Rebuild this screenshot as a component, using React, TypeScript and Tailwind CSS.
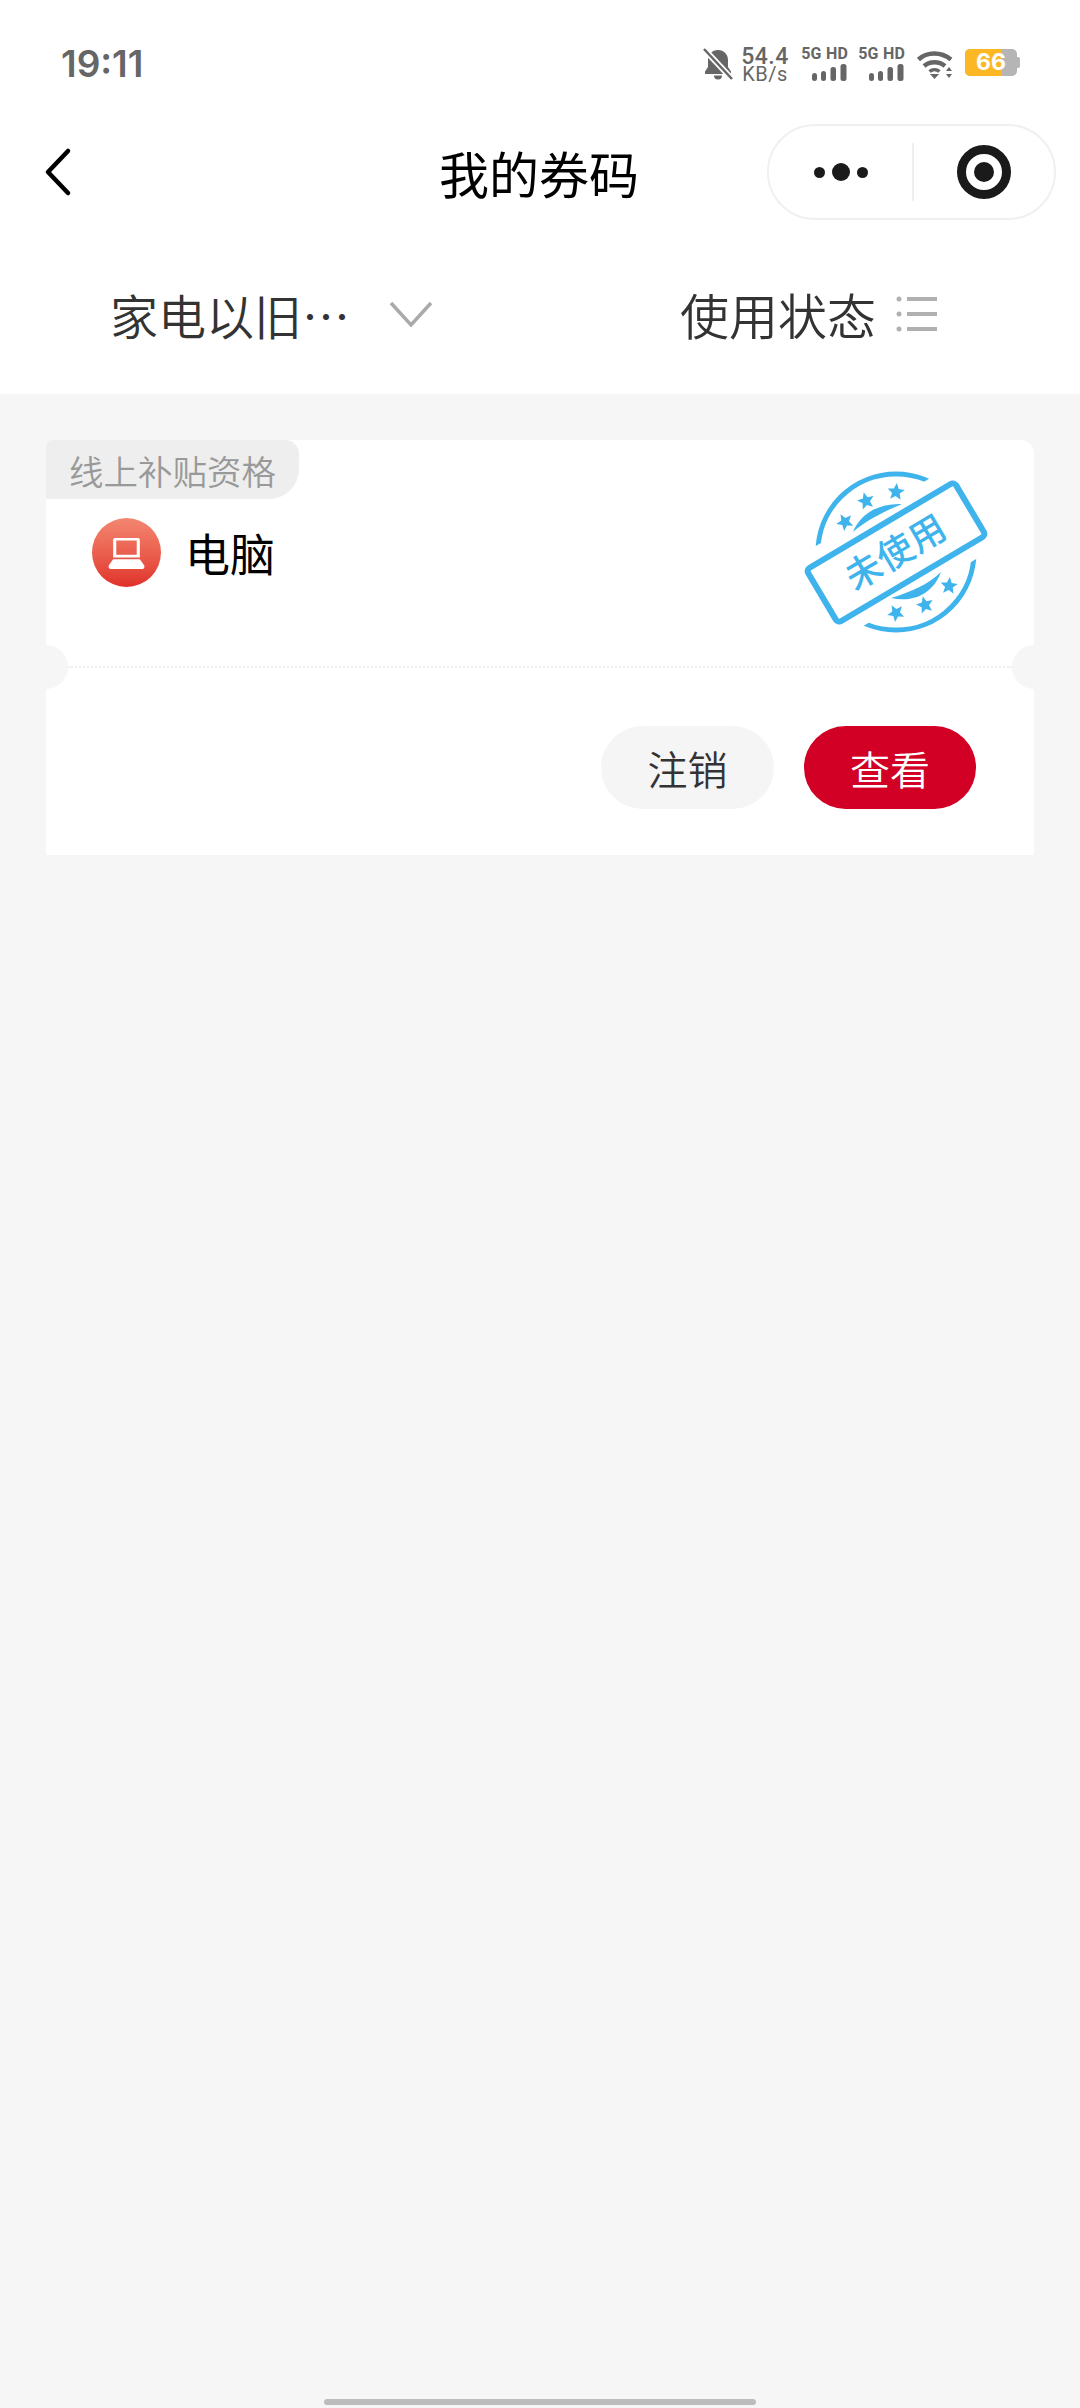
import React from 'react';

const CJK = '"Noto Sans CJK SC", "Noto Sans", sans-serif';

const starPoints = (cx: number, cy: number, r: number, rot = 0) => {
  const pts: string[] = [];
  for (let i = 0; i < 10; i++) {
    const rad = i % 2 === 0 ? r : r * 0.45;
    const a = ((-90 + rot + i * 36) * Math.PI) / 180;
    pts.push(`${(cx + rad * Math.cos(a)).toFixed(1)},${(cy + rad * Math.sin(a)).toFixed(1)}`);
  }
  return pts.join(' ');
};

const SignalBlock = () => (
  <div className="flex flex-col items-end w-[48px]">
    <span className="text-[16px] leading-[14px] font-bold text-[#666] tracking-[0.2px] whitespace-nowrap" style={{ fontFamily: 'Roboto, sans-serif' }}>5G HD</span>
    <svg width="36" height="18" viewBox="0 0 36 18" className="mt-[3px]" fill="#666">
      <rect x="0" y="9" width="5" height="8" rx="2.5" />
      <rect x="9" y="7" width="5" height="10" rx="2.5" />
      <rect x="18.5" y="3" width="5.5" height="14" rx="2.5" />
      <rect x="28.5" y="0" width="6" height="17" rx="2.5" />
    </svg>
  </div>
);

const StatusBar = () => (
  <div className="h-[120px] flex items-start justify-between pl-[61px] pr-[60px] pt-[44px]">
    <span className="text-[37px] leading-[40px] font-semibold text-[#666]" style={{ fontFamily: 'Inter, sans-serif' }}>19:11</span>
    <div className="flex items-start pt-[3px]">
      <svg width="30" height="32" viewBox="0 0 30 32" fill="#666" className="mt-[1px]">
        <path d="M15 2c-6 0-10 4.5-10 10v7l-3 4.5V26h26v-2.5L25 19v-7c0-5.5-4-10-10-10z" />
        <path d="M11 27.5h8a4 4 0 0 1-8 0z" />
        <path d="M1 1l28 30" stroke="#fff" strokeWidth="6" />
        <path d="M1 1l28 30" stroke="#666" strokeWidth="2.5" />
      </svg>
      <div className="ml-[7px] w-[50px] flex flex-col items-center text-[#666]" style={{ fontFamily: 'Roboto, sans-serif' }}>
        <span className="text-[23px] leading-[19px] font-medium tracking-[0.5px]">54.4</span>
        <span className="text-[20px] leading-[17px] tracking-[0.5px]">KB/s</span>
      </div>
      <div className="ml-[10px] flex gap-[9px]">
        <SignalBlock />
        <SignalBlock />
      </div>
      <svg width="38" height="30" viewBox="0 0 38 30" className="ml-[12px] mt-[3px]" fill="none" stroke="#666">
        <path d="M1.5 9.5C10 1.5 24 1.5 34 9.5" strokeWidth="4.5" />
        <path d="M7 16c6-5 15-5 21 0" strokeWidth="4.5" />
        <path d="M12.5 21.5c3-2.5 7-2.5 10 0" strokeWidth="3.5" />
        <path d="M13 24h9l-4.5 5z" fill="#666" stroke="none" />
        <path d="M32 17l3 4h-6zM32 28l3-4h-6z" fill="#666" stroke="none" />
      </svg>
      <div className="ml-[10px] mt-[2px] flex items-center">
        <div className="relative w-[52px] h-[27px] rounded-[5px] bg-[#b5b5b5] overflow-hidden">
          <div className="absolute left-0 top-0 bottom-0 w-[37px] bg-[#fbb824]" />
          <span className="absolute inset-0 flex items-center justify-center text-[23px] font-bold text-white" style={{ fontFamily: 'Inter, sans-serif' }}>66</span>
        </div>
        <div className="w-[3px] h-[11px] bg-[#b5b5b5] rounded-r-[2px]" />
      </div>
    </div>
  </div>
);

const NavBar = () => (
  <div className="relative h-[110px] flex items-center justify-center">
    <svg width="30" height="50" viewBox="0 0 30 50" fill="none" stroke="#000" strokeWidth="4.5" strokeLinecap="round" strokeLinejoin="round" className="absolute left-[42px] top-[27px]">
      <path d="M26 4L6 25l20 21" />
    </svg>
    <span className="relative top-[-3px] left-[-1px] text-[50px] leading-[60px] text-black" style={{ fontFamily: CJK }}>我的券码</span>
    <div className="absolute left-[767px] top-[4px] w-[289px] h-[96px] rounded-[48px] border-2 border-[#f0f0f0] bg-white flex items-center">
      <div className="w-[143px] flex items-center justify-center gap-[7px]">
        <span className="w-[11px] h-[11px] rounded-full bg-[#1a1a1a]" />
        <span className="w-[18px] h-[18px] rounded-full bg-[#1a1a1a]" />
        <span className="w-[11px] h-[11px] rounded-full bg-[#1a1a1a]" />
      </div>
      <div className="w-[2px] h-[58px] bg-[#efefef]" />
      <div className="flex-1 flex items-center justify-center">
        <div className="w-[54px] h-[54px] rounded-full border-[9px] border-[#1a1a1a] flex items-center justify-center">
          <span className="w-[20px] h-[20px] rounded-full bg-[#1a1a1a]" />
        </div>
      </div>
    </div>
  </div>
);

const FilterBar = () => (
  <div className="h-[164px] bg-white flex items-center pt-[4px]" style={{ fontFamily: CJK }}>
    <div className="w-[680px] pl-[110px] flex items-center">
      <span className="text-[48px] leading-[60px] font-[350] text-[#333] whitespace-nowrap">家电以旧</span>
      <span className="text-[48px] leading-[60px] font-[350] text-[#333] w-[48px] text-center">⋯</span>
      <svg width="44" height="28" viewBox="0 0 44 28" fill="none" stroke="#aaa" strokeWidth="3.5" className="ml-[39px]">
        <path d="M2 3l20 22L42 3" />
      </svg>
    </div>
    <div className="flex items-center">
      <span className="text-[49px] leading-[60px] font-[350] text-[#333] whitespace-nowrap">使用状态</span>
      <svg width="42" height="40" viewBox="0 0 42 40" className="ml-[20px]" fill="#b0b0b0">
        <circle cx="3" cy="5" r="2.5" />
        <circle cx="3" cy="20" r="2.5" />
        <circle cx="3" cy="35" r="2.5" />
        <rect x="11" y="3" width="30" height="4" />
        <rect x="11" y="18" width="30" height="4" />
        <rect x="11" y="33" width="30" height="4" />
      </svg>
    </div>
  </div>
);

const Stamp = () => (
  <svg width="240" height="200" viewBox="0 0 240 200" className="absolute left-[733px] top-[10px]">
    <circle cx="117" cy="102" r="78" fill="none" stroke="#3fb4ec" strokeWidth="5" />
    <g transform="rotate(-30.7 117 102.5)">
      <rect x="21" y="56" width="192" height="93" fill="#fff" />
      <rect x="31" y="71.5" width="172" height="62" rx="4" fill="#fff" stroke="#3fb4ec" strokeWidth="6" />
      <text x="117" y="115" textAnchor="middle" fontSize="36" fontWeight="500" fill="#3fb4ec" letterSpacing="1" style={{ fontFamily: CJK }}>未使用</text>
    </g>
    <polygon points={starPoints(117, 42, 9, 5)} fill="#3fb4ec" />
    <polygon points={starPoints(87, 51, 9, -15)} fill="#3fb4ec" />
    <polygon points={starPoints(66, 72, 9, -30)} fill="#3fb4ec" />
    <polygon points={starPoints(170, 136, 9, 5)} fill="#3fb4ec" />
    <polygon points={starPoints(146, 155, 9, -15)} fill="#3fb4ec" />
    <polygon points={starPoints(117, 163, 9, -30)} fill="#3fb4ec" />
    <path d="M74 82C82 62 102 53 123 54C104 62 88 70 74 82z" fill="#3fb4ec" />
    <path d="M112 148C132 142 150 134 162 122C154 144 134 153 112 148z" fill="#3fb4ec" />
  </svg>
);

const CouponCard = () => (
  <div className="relative mx-[46px] mt-[46px] h-[415px] bg-white rounded-tr-[14px] rounded-tl-[6px]" style={{ fontFamily: CJK }}>
    <div className="w-[253px] h-[59px] bg-[#eeeeee] rounded-br-[30px] rounded-tr-[14px] rounded-tl-[6px] pl-[23px] flex items-center">
      <span className="text-[34.5px] leading-[44px] font-[350] text-[#999] whitespace-nowrap">线上补贴资格</span>
    </div>
    <div className="pl-[46px] pt-[19px] flex h-[149px] items-start">
      <div className="w-[69px] h-[69px] rounded-full bg-gradient-to-b from-[#f38671] to-[#e02f2a] flex items-center justify-center">
        <svg width="37" height="32" viewBox="0 0 40 36">
          <path fillRule="evenodd" d="M7 1h26a2 2 0 0 1 2 2v20H5V3a2 2 0 0 1 2-2zm1.5 3v16h23V4z" fill="#fff" />
          <path d="M5 25h30l5 7v2a2 2 0 0 1-2 2H2a2 2 0 0 1-2-2v-2z" fill="#fff" />
        </svg>
      </div>
      <span className="ml-[24px] text-[45px] leading-[69px] text-black">电脑</span>
    </div>
    <Stamp />
    <div className="mx-[22px] border-t-2 border-dotted border-[#eeeeee] mt-[18px]" />
    <span className="absolute left-[-22px] top-[205px] w-[44px] h-[44px] rounded-full bg-[#f6f6f6]" />
    <span className="absolute right-[-22px] top-[205px] w-[44px] h-[44px] rounded-full bg-[#f6f6f6]" />
    <div className="flex justify-end gap-[30px] pr-[58px] pt-[58px]">
      <div className="w-[173px] h-[83px] rounded-full bg-[#f5f5f5] flex items-center justify-center text-[40px] font-[350] text-[#333]">注销</div>
      <div className="w-[172px] h-[83px] rounded-full bg-[#d10024] flex items-center justify-center text-[40px] font-[350] text-white">查看</div>
    </div>
  </div>
);

const App: React.FC = () => {
  return (
    <div className="w-[1080px] h-[2408px] overflow-hidden bg-[#f6f6f6] flex flex-col">
      <div className="bg-white">
        <StatusBar />
        <NavBar />
        <FilterBar />
      </div>
      <CouponCard />
      <div className="flex-1" />
      <div className="h-[9px] flex justify-center">
        <div className="w-[432px] h-[6px] rounded-full bg-[#bdbdbd]" />
      </div>
    </div>
  );
};

export default App;
